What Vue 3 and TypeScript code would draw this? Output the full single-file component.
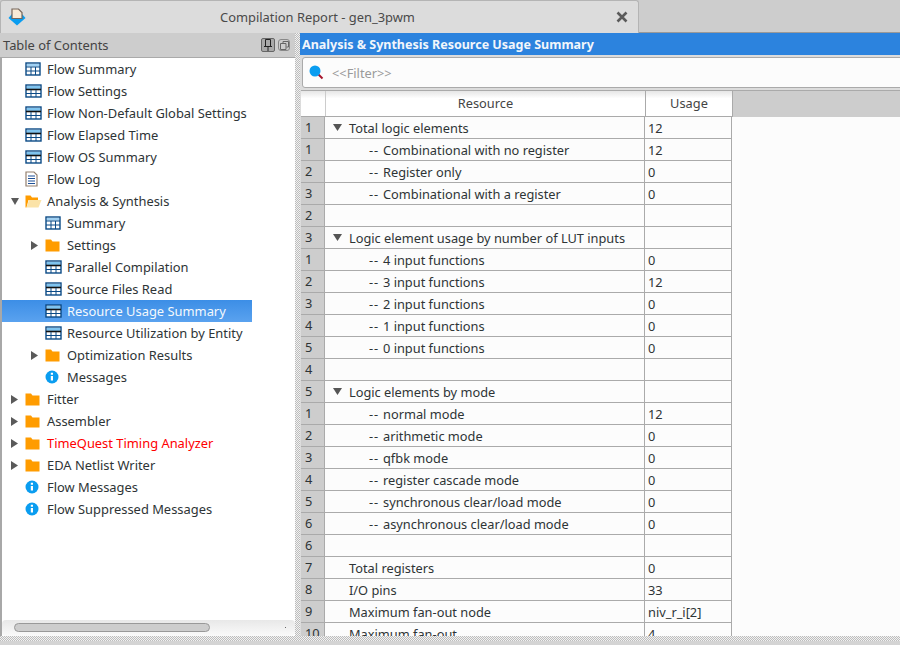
<template>
  <div class="window">
    <div class="tabbar">
      <div class="tab">
        <svg class="logo" width="18" height="18" viewBox="0 0 18 18">
          <path d="M0.5 10 L4 6 H14 L17.5 10 L9 17.5 Z" fill="#0a9df0" />
          <path d="M4 1 H10.5 L14 4.5 V10.5 H4 Z" fill="#f8ead6" stroke="#76665a" stroke-width="1.2" />
        </svg>
        <span class="tab-title">Compilation Report - gen_3pwm</span>
        <svg class="close" width="12" height="12" viewBox="0 0 12 12">
          <path d="M1.5 1.5 L10.5 10.5 M10.5 1.5 L1.5 10.5" stroke="#5a5a5a" stroke-width="2.6" />
        </svg>
      </div>
    </div>

    <div class="panes">
      <aside class="toc">
        <div class="toc-head">
          <span>Table of Contents</span>
          <div class="toc-tools">
            <span class="tool tool-on">
              <svg width="10" height="12" viewBox="0 0 10 12">
                <path d="M2.5 0.5 H7.5 V7.5 H2.5 Z M1 7.5 H9 M5 7.5 V12" fill="none" stroke="#222" />
              </svg>
            </span>
            <span class="tool tool-off">
              <svg width="9" height="9" viewBox="0 0 9 9">
                <path d="M3 2.5 V0.5 H8.5 V6 H6.5 M0.5 2.5 H6 V8.5 H0.5 Z" fill="none" stroke="#666" />
              </svg>
            </span>
          </div>
        </div>
        <div class="tree">
          <div
            v-for="item in tocItems"
            :key="item.label"
            class="tree-row"
            :class="{ selected: item.selected, nested: item.nested, alert: item.alert }"
          >
            <span class="arrow">
              <svg v-if="item.arrow === 'open'" width="8" height="7" viewBox="0 0 8 7">
                <path d="M0 0 H8 L4 7 Z" fill="#5a5a5a" />
              </svg>
              <svg v-else-if="item.arrow === 'closed'" width="7" height="9" viewBox="0 0 7 9">
                <path d="M0 0 L7 4.5 L0 9 Z" fill="#5a5a5a" />
              </svg>
            </span>
            <span class="icon">
              <svg v-if="item.icon === 'table'" width="16" height="14" viewBox="0 0 16 14">
                <rect x="1" y="1" width="14" height="12" fill="#fff" stroke="#0b4a86" stroke-width="1.4" />
                <rect x="2" y="2" width="12" height="2.5" fill="#9fd0f2" />
                <path d="M1 5 H15 M1 9 H15 M6 5 V13 M10.5 5 V13" stroke="#0b4a86" />
              </svg>
              <svg v-else-if="item.icon === 'grid'" width="17" height="14" viewBox="0 0 17 14">
                <rect x="1" y="1" width="15" height="12" fill="#fff" stroke="#0b4a86" stroke-width="1.4" />
                <rect x="2" y="2" width="13" height="3" fill="#7fc4ef" />
                <path d="M1 5.5 H16" stroke="#111" stroke-width="1.6" />
                <path d="M1 9.5 H16 M6 6 V13 M11 6 V13" stroke="#0b4a86" />
              </svg>
              <svg v-else-if="item.icon === 'log'" width="13" height="16" viewBox="0 0 13 16">
                <path d="M1 1 H9 L12 4 V15 H1 Z" fill="#fff" stroke="#94806f" stroke-width="1.2" />
                <path d="M3 5 H10 M3 7.5 H10 M3 10 H10 M3 12.5 H10" stroke="#1c4f96" />
              </svg>
              <svg v-else-if="item.icon === 'folder'" width="15" height="13" viewBox="0 0 15 13">
                <path d="M0.5 0.5 H6 L7.5 2.5 H14.5 V12.5 H0.5 Z" fill="#ff9c00" />
              </svg>
              <svg v-else-if="item.icon === 'open'" width="17" height="13" viewBox="0 0 17 13">
                <path d="M0.5 0.5 H5.5 L7 2.5 H13 V5 H3.5 L1.5 12.5 H0.5 Z" fill="#ff9c00" />
                <path d="M4 5 H16.5 L13.5 12.5 H1.5 Z" fill="#fbe3a8" />
              </svg>
              <svg v-else-if="item.icon === 'info'" width="14" height="14" viewBox="0 0 14 14">
                <circle cx="7" cy="7" r="6.5" fill="#0a9df0" />
                <path d="M5.8 2.8 H8 V4.8 H5.8 Z M5.8 6 H8 V10.5 H5.8 Z" fill="#fff" />
              </svg>
            </span>
            <span class="tree-label">{{ item.label }}</span>
          </div>
        </div>
        <div class="hscroll">
          <div class="hscroll-thumb"></div>
          <span class="hscroll-dot"></span>
        </div>
      </aside>

      <div class="splitter"></div>

      <section class="report">
        <div class="report-title">Analysis &amp; Synthesis Resource Usage Summary</div>
        <div class="filter">
          <svg width="15" height="15" viewBox="0 0 15 15">
            <path d="M9.5 9.5 L13.5 13.5" stroke="#a5152c" stroke-width="2" />
            <circle cx="6" cy="6" r="5.5" fill="#0a9df0" />
          </svg>
          <span>&lt;&lt;Filter&gt;&gt;</span>
        </div>
        <div class="table">
          <div class="head-row">
            <div class="corner"></div>
            <div class="head-cell col-resource">Resource</div>
            <div class="head-cell col-usage">Usage</div>
            <div class="head-rest"></div>
          </div>
          <div v-for="(row, index) in rows" :key="index" class="row">
            <div class="row-num">{{ row.num }}</div>
            <div class="cell col-resource" :class="{ child: row.child }">
              <svg v-if="row.group" class="row-arrow" width="9" height="7" viewBox="0 0 9 7">
                <path d="M0 0 H9 L4.5 7 Z" fill="#555" />
              </svg>
              <span v-if="row.child" class="dash">--</span>
              <span>{{ row.name }}</span>
            </div>
            <div class="cell col-usage">{{ row.usage }}</div>
          </div>
        </div>
      </section>
    </div>

    <div class="bottom-splitter"></div>
    <div class="statusbar"></div>
  </div>
</template>

<script setup lang="ts">
type TocItem = {
  label: string
  icon: string
  arrow?: string
  nested?: boolean
  selected?: boolean
  alert?: boolean
}

type Row = {
  num: number
  name: string
  usage: string
  group?: boolean
  child?: boolean
}

const tocItems: TocItem[] = [
  { label: 'Flow Summary', icon: 'table' },
  { label: 'Flow Settings', icon: 'grid' },
  { label: 'Flow Non-Default Global Settings', icon: 'grid' },
  { label: 'Flow Elapsed Time', icon: 'grid' },
  { label: 'Flow OS Summary', icon: 'grid' },
  { label: 'Flow Log', icon: 'log' },
  { label: 'Analysis & Synthesis', icon: 'open', arrow: 'open' },
  { label: 'Summary', icon: 'table', nested: true },
  { label: 'Settings', icon: 'folder', arrow: 'closed', nested: true },
  { label: 'Parallel Compilation', icon: 'grid', nested: true },
  { label: 'Source Files Read', icon: 'grid', nested: true },
  { label: 'Resource Usage Summary', icon: 'grid', nested: true, selected: true },
  { label: 'Resource Utilization by Entity', icon: 'grid', nested: true },
  { label: 'Optimization Results', icon: 'folder', arrow: 'closed', nested: true },
  { label: 'Messages', icon: 'info', nested: true },
  { label: 'Fitter', icon: 'folder', arrow: 'closed' },
  { label: 'Assembler', icon: 'folder', arrow: 'closed' },
  { label: 'TimeQuest Timing Analyzer', icon: 'folder', arrow: 'closed', alert: true },
  { label: 'EDA Netlist Writer', icon: 'folder', arrow: 'closed' },
  { label: 'Flow Messages', icon: 'info' },
  { label: 'Flow Suppressed Messages', icon: 'info' }
]

const rows: Row[] = [
  { num: 1, name: 'Total logic elements', usage: '12', group: true },
  { num: 1, name: 'Combinational with no register', usage: '12', child: true },
  { num: 2, name: 'Register only', usage: '0', child: true },
  { num: 3, name: 'Combinational with a register', usage: '0', child: true },
  { num: 2, name: '', usage: '' },
  { num: 3, name: 'Logic element usage by number of LUT inputs', usage: '', group: true },
  { num: 1, name: '4 input functions', usage: '0', child: true },
  { num: 2, name: '3 input functions', usage: '12', child: true },
  { num: 3, name: '2 input functions', usage: '0', child: true },
  { num: 4, name: '1 input functions', usage: '0', child: true },
  { num: 5, name: '0 input functions', usage: '0', child: true },
  { num: 4, name: '', usage: '' },
  { num: 5, name: 'Logic elements by mode', usage: '', group: true },
  { num: 1, name: 'normal mode', usage: '12', child: true },
  { num: 2, name: 'arithmetic mode', usage: '0', child: true },
  { num: 3, name: 'qfbk mode', usage: '0', child: true },
  { num: 4, name: 'register cascade mode', usage: '0', child: true },
  { num: 5, name: 'synchronous clear/load mode', usage: '0', child: true },
  { num: 6, name: 'asynchronous clear/load mode', usage: '0', child: true },
  { num: 6, name: '', usage: '' },
  { num: 7, name: 'Total registers', usage: '0' },
  { num: 8, name: 'I/O pins', usage: '33' },
  { num: 9, name: 'Maximum fan-out node', usage: 'niv_r_i[2]' },
  { num: 10, name: 'Maximum fan-out', usage: '4' }
]
</script>

<style>
html,
body {
  margin: 0;
  background: #dcdcdc;
}
</style>

<style scoped>
.window {
  width: 900px;
  height: 645px;
  display: flex;
  flex-direction: column;
  overflow: hidden;
  background: #dcdcdc;
  font-family: "Noto Sans", sans-serif;
  font-size: 12.9px;
  color: #2e3436;
}

.tabbar {
  height: 33px;
  flex: none;
  background: #cdcdcd;
  box-shadow: inset 0 -1px 0 #999;
}

.tab {
  width: 639px;
  height: 33px;
  box-sizing: border-box;
  display: flex;
  align-items: center;
  background: #dcdcdc;
  border: 1px solid #b4b4b4;
  border-bottom: none;
  border-radius: 3px 3px 0 0;
  padding: 0 10px 0 7px;
}

.tab-title {
  margin-left: 194px;
  color: #4a4a4a;
}

.close {
  margin-left: auto;
}

.panes {
  flex: 1;
  min-height: 0;
  display: flex;
}

.toc {
  width: 295px;
  flex: none;
  display: flex;
  flex-direction: column;
  background: #fff;
  border-left: 2px solid #a8a8a8;
  box-sizing: border-box;
}

.toc-head {
  height: 24px;
  flex: none;
  margin-left: -2px;
  padding: 0 5px 0 3px;
  display: flex;
  align-items: center;
  justify-content: space-between;
  background: #cdcdcd;
  border-bottom: 1px solid #aaa;
  color: #444;
}

.toc-tools {
  display: flex;
  gap: 3px;
  align-items: center;
}

.tool {
  display: flex;
  align-items: center;
  justify-content: center;
  box-sizing: border-box;
}

.tool-on {
  width: 14px;
  height: 14px;
  background: #a9a9a9;
  border: 1px solid #666;
  border-radius: 2px;
}

.tool-off {
  width: 12px;
  height: 12px;
  border: 1px solid #888;
  border-radius: 3px;
}

.tree {
  flex: 1;
  min-height: 0;
}

.tree-row {
  height: 22px;
  display: flex;
  align-items: center;
  padding-left: 9px;
}

.tree-row.nested {
  padding-left: 29px;
}

.tree-row.selected {
  width: 250px;
  box-sizing: border-box;
  background: linear-gradient(#3c8ee6, #5aa2ef);
  color: #f4f8fc;
}

.tree-row.alert {
  color: #ff0000;
}

.arrow {
  width: 14px;
  display: flex;
  align-items: center;
}

.icon {
  width: 22px;
  display: flex;
  align-items: center;
}

.hscroll {
  height: 16px;
  flex: none;
  padding: 3px 0 0 12px;
  box-sizing: border-box;
  background: linear-gradient(#e8e8e8, #fafafa);
  border-radius: 4px;
  position: relative;
}

.hscroll-thumb {
  width: 194px;
  height: 7px;
  background: #cdcdcd;
  border: 1px solid #999;
  border-radius: 5px;
}

.hscroll-dot {
  position: absolute;
  left: 283px;
  top: 7px;
  width: 1px;
  height: 1px;
  background: #666;
}

.splitter {
  width: 5px;
  flex: none;
  background: repeating-conic-gradient(#f2f2f2 0 25%, #bdbdbd 0 50%) 0 0 / 2px 2px;
}

.bottom-splitter {
  height: 5px;
  flex: none;
  background: repeating-conic-gradient(#f2f2f2 0 25%, #bdbdbd 0 50%) 0 0 / 2px 2px;
}

.statusbar {
  height: 4px;
  flex: none;
  background: #d4d4d4;
}

.report {
  flex: 1;
  min-width: 0;
  display: flex;
  flex-direction: column;
  background: #dcdcdc;
}

.report-title {
  height: 22px;
  flex: none;
  line-height: 24px;
  padding-left: 2px;
  background: #2c83de;
  color: #f2f6fb;
  font-size: 12.5px;
  font-weight: 700;
}

.filter {
  height: 31px;
  flex: none;
  margin: 2px -5px 2px 2px;
  padding-left: 6px;
  display: flex;
  align-items: center;
  gap: 8px;
  box-sizing: border-box;
  background: #fcfcfc;
  border: 1px solid #aaa;
  border-radius: 3px;
  color: #9a9a9a;
  font-size: 12.8px;
}

.table {
  flex: 1;
  min-height: 0;
  overflow: hidden;
  margin-left: 1px;
  background: #fcfcfc;
  border-top: 1px solid #aaa;
  font-size: 12.8px;
}

.head-row {
  height: 26px;
  display: flex;
  box-sizing: border-box;
  border-bottom: 1px solid #aaa;
  background: #fcfcfc;
}

.corner {
  width: 24px;
  flex: none;
  border-right: 1px solid #ccc;
  background: linear-gradient(#e6e6e6, #fff 30%);
}

.head-cell {
  line-height: 25px;
  text-align: center;
  background: linear-gradient(#e6e6e6, #fff 30%);
  color: #444;
}

.head-rest {
  flex: 1;
  background: #cdcdcd;
  margin-bottom: -1px;
}

.col-resource {
  width: 320px;
  flex: none;
  box-sizing: border-box;
  border-right: 1px solid #aaa;
}

.col-usage {
  width: 87px;
  flex: none;
  box-sizing: border-box;
  border-right: 1px solid #aaa;
}

.row {
  height: 22px;
  display: flex;
  box-sizing: border-box;
  border-bottom: 1px solid #aaa;
  width: 431px;
}

.row-num {
  width: 24px;
  flex: none;
  box-sizing: border-box;
  padding-left: 4px;
  line-height: 21px;
  background: #cdcdcd;
  border-right: 1px solid #aaa;
}

.cell {
  display: flex;
  align-items: center;
  padding-left: 3px;
  white-space: nowrap;
}

.col-resource.cell {
  padding-left: 24px;
  position: relative;
}

.col-resource.child {
  padding-left: 44px;
}

.dash {
  width: 14px;
  flex: none;
  letter-spacing: 1px;
}

.row-arrow {
  position: absolute;
  left: 8px;
  top: 7px;
}
</style>
